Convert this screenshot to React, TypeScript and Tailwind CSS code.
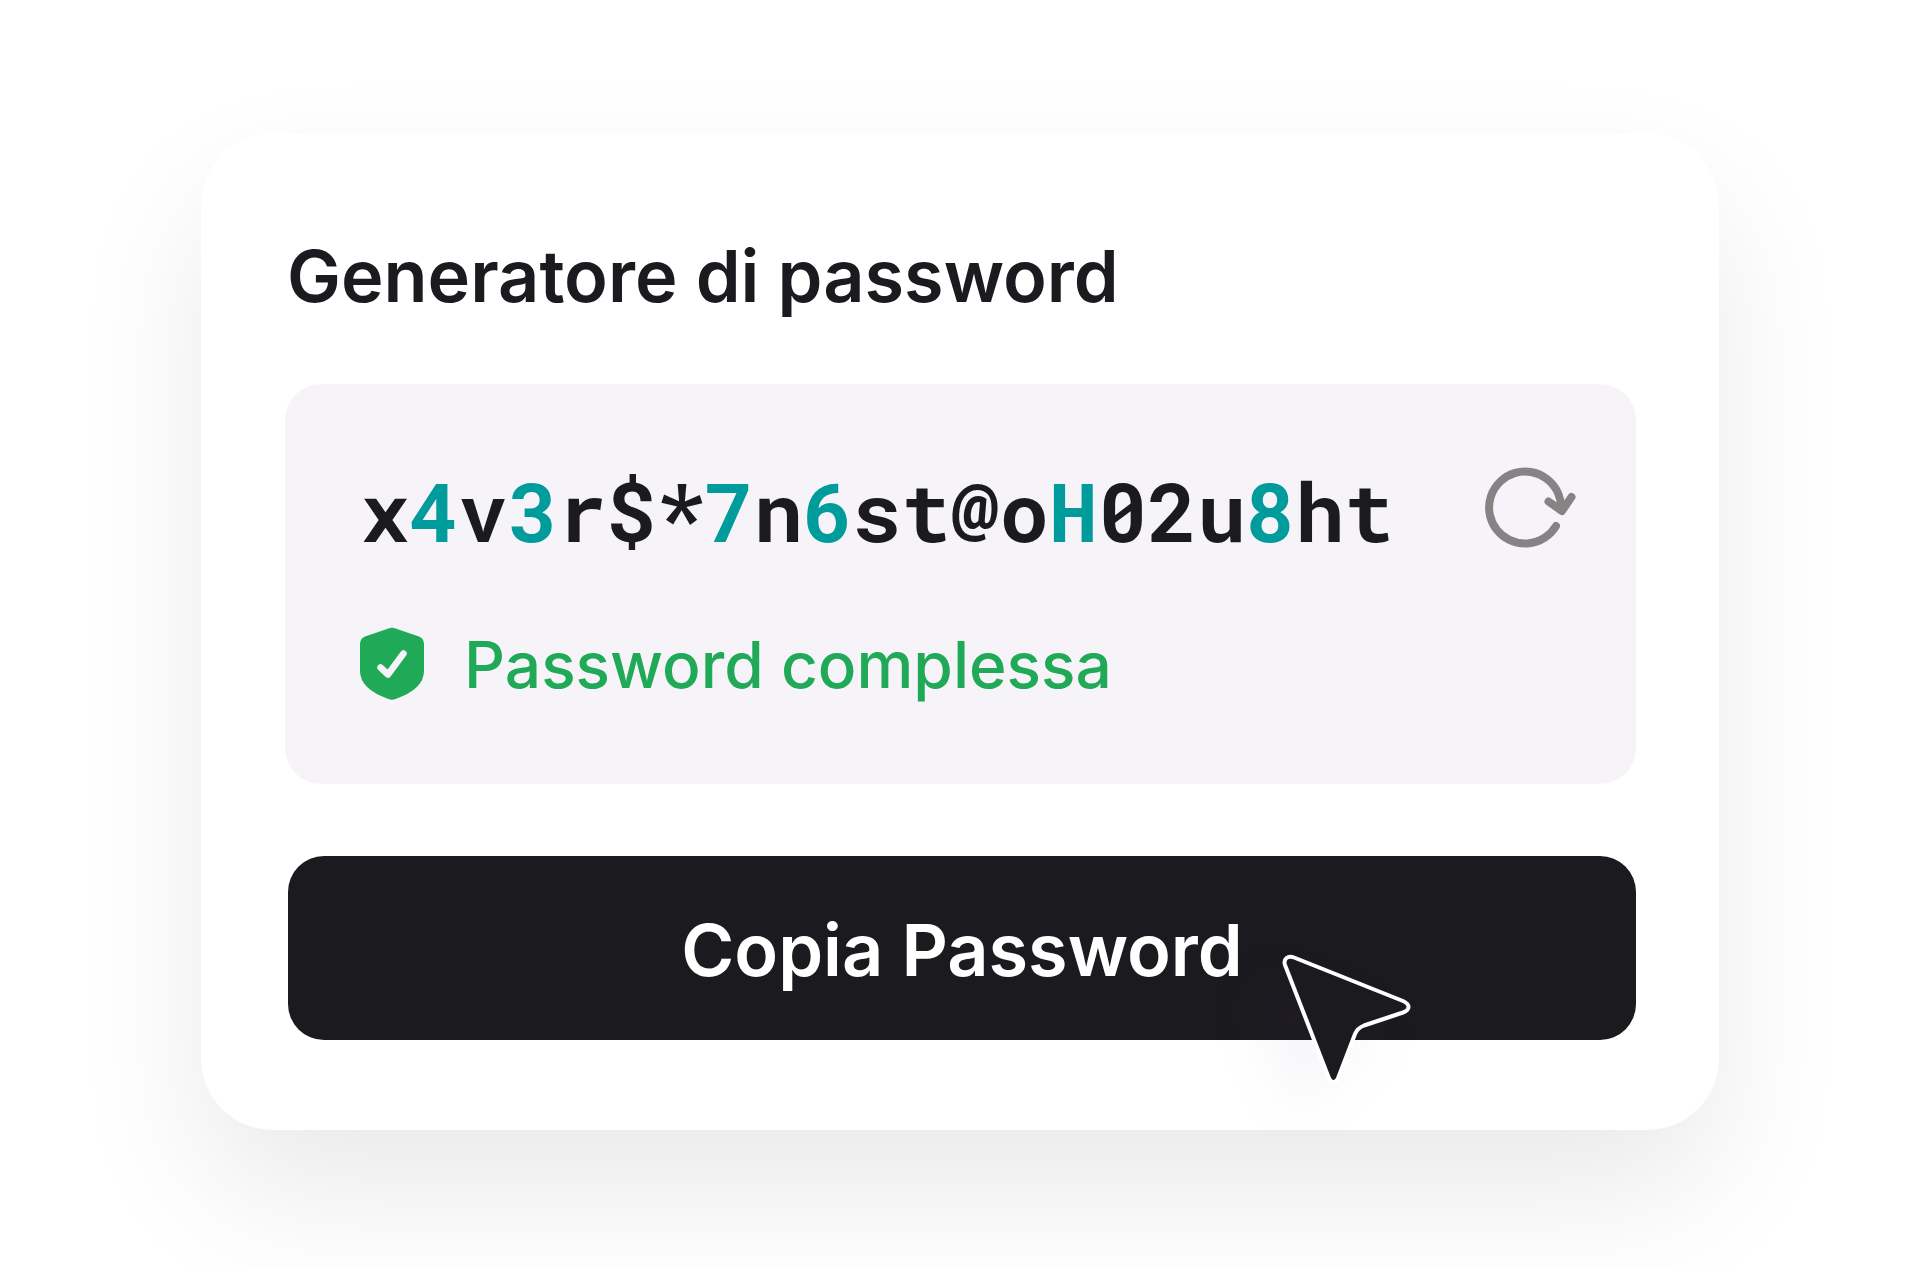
import clsx from "clsx";

const PASSWORD = "x4v3r$*7n6st@oH02u8ht";

// Positions of the characters drawn in teal
const HIGHLIGHTED = [1, 3, 7, 9, 14, 18];

function RefreshIcon() {
  return (
    <svg
      viewBox="0 0 96 88"
      className="h-[88px] w-24"
      fill="none"
      stroke="#858384"
      strokeWidth="8"
      strokeLinecap="round"
      strokeLinejoin="round"
      aria-hidden="true"
    >
      <path d="M76 46A36 36 0 1 0 71 62" />
      <path d="M63.500 37.500L77 47L86.500 33" />
    </svg>
  );
}

function ShieldIcon() {
  return (
    <svg viewBox="0 0 64 74" className="h-[74px] w-16" aria-hidden="true">
      <path
        d="M28.500 1.500Q32 0 35.500 1.500L59 9.500Q64 11.500 64 17V44Q64 62 35.500 72Q32 73.500 28.500 72Q0 62 0 44V17Q0 11.500 5 9.500Z"
        fill="#20A956"
      />
      <path
        d="M20.500 40.500L28 47.500L43.500 26.500"
        fill="none"
        stroke="#F6F4F8"
        strokeWidth="6.500"
        strokeLinecap="round"
        strokeLinejoin="round"
      />
    </svg>
  );
}

function Cursor() {
  return (
    <svg
      viewBox="0 0 180 180"
      className="pointer-events-none absolute top-[74px] right-[196px] size-[180px] overflow-visible drop-shadow-[-30px_28px_28px_rgba(90,60,140,0.06)]"
      aria-hidden="true"
    >
      <path
        d="M25 35C23 29 28 25 34 27.500L143 71Q148.500 73.500 148.500 77T143 82.500L104 95.500Q97.500 98 95 104L78.500 147Q76.500 152 73.500 152T68.500 147Z"
        fill="#1B1A1E"
        stroke="#fff"
        strokeWidth="4"
        strokeLinejoin="round"
      />
    </svg>
  );
}

export default function App() {
  return (
    <div className="min-h-screen overflow-hidden bg-white px-[201px] pt-[133px] pb-[137px] font-['Inter',sans-serif] text-[#1B1A1E]">
      <main className="rounded-[72px] bg-white pt-[99px] pr-[83px] pb-[90px] pl-[84px] shadow-[0_64px_140px_-4px_rgba(0,0,0,0.09)]">
        <h1 className="mb-[64px] ml-[2px] text-[72px] leading-[88px] font-semibold">
          Generatore di password
        </h1>

        <section className="rounded-[36px] bg-[#F6F4F8] px-[75px] pt-[78px] pb-[82px]">
          <div className="flex items-center justify-between">
            <output className="font-['Roboto_Mono','DejaVu_Sans_Mono',monospace] text-[82px] leading-[96px] font-bold">
              {PASSWORD.split("").map((char, i) => (
                <span key={i} className={clsx(HIGHLIGHTED.includes(i) && "text-[#009B9B]")}>
                  {char}
                </span>
              ))}
            </output>
            <button type="button" aria-label="Rigenera password" className="-mr-[20px] mb-1">
              <RefreshIcon />
            </button>
          </div>

          <div className="mt-[68px] flex items-center gap-10">
            <ShieldIcon />
            <p className="pt-[2px] text-[64px] leading-[74px] font-medium text-[#20A956]">
              Password complessa
            </p>
          </div>
        </section>

        <div className="relative mt-[72px] ml-[3px]">
          <button
            type="button"
            className="h-[184px] w-full rounded-[36px] bg-[#1B1A1E] pt-1 text-[72px] font-semibold text-white"
          >
            Copia Password
          </button>
          <Cursor />
        </div>
      </main>
    </div>
  );
}
